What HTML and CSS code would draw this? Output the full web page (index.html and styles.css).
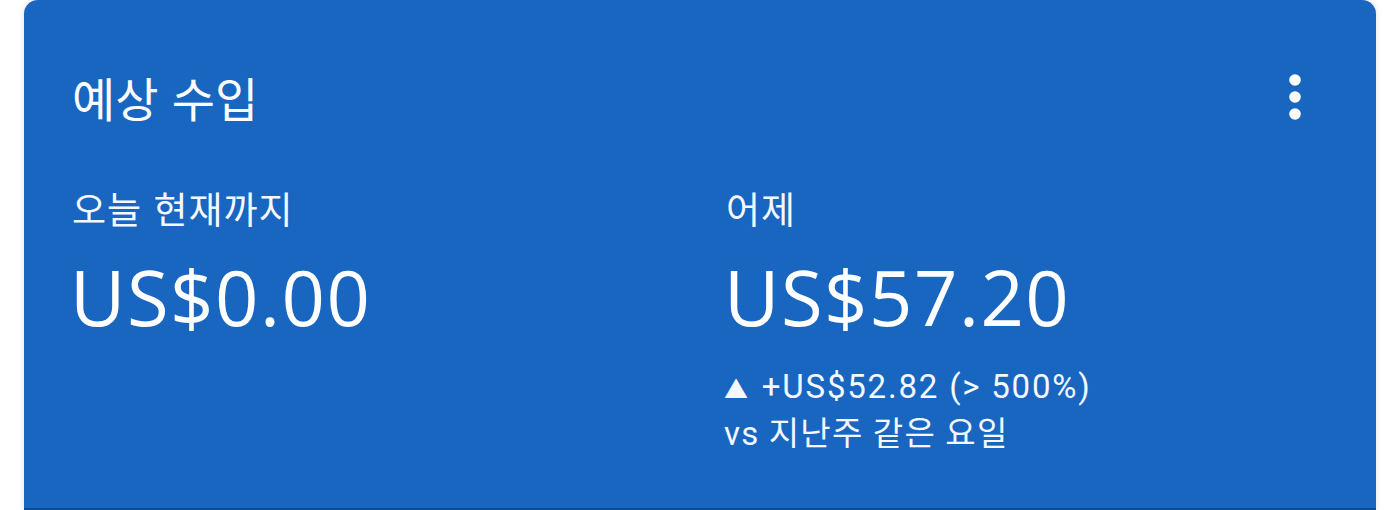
FILE: index.html
```html
<!DOCTYPE html>
<html lang="ko">
<head>
    <meta charset="UTF-8">
    <title>예상 수입</title>
    <link rel="stylesheet" href="styles.css">
</head>
<body>
    <div class="earnings-card">
        <!-- 헤더 -->
        <div class="card-header">
            <div class="card-title">예상 수입</div>
            <div class="more-btn">
                <svg width="12" height="46" viewBox="0 0 12 46">
                    <circle cx="6" cy="6" r="5.8" fill="#fff"/>
                    <circle cx="6" cy="23" r="5.8" fill="#fff"/>
                    <circle cx="6" cy="40" r="5.8" fill="#fff"/>
                </svg>
            </div>
        </div>

        <!-- 수입 항목 -->
        <div class="stats">
            <div class="stat">
                <div class="stat-label">오늘 현재까지</div>
                <div class="stat-value">US$0.00</div>
            </div>
            <div class="stat">
                <div class="stat-label">어제</div>
                <div class="stat-value">US$57.20</div>
                <div class="stat-change">
                    <div class="change-amount"><span class="arrow">▲</span> +US$52.82 (&gt; 500%)</div>
                    <div>vs 지난주 같은 요일</div>
                </div>
            </div>
        </div>
    </div>
</body>
</html>
```

FILE: styles.css
```css
* {
    margin: 0;
    padding: 0;
    box-sizing: border-box;
}

body {
    font-family: Roboto, "Noto Sans CJK KR", sans-serif;
    background-color: #fff;
    color: #fff;
    height: 510px;
    overflow: hidden;
}

/* 카드 */
.earnings-card {
    margin: 0 24px;
    height: 510px;
    background: #1966c1;
    border-radius: 14px 14px 0 0;
    border-bottom: 2px solid #0f4c98;
    box-shadow: 0 0 6px rgba(0, 0, 0, 0.12);
    padding: 73px 75px 0 48px;
}

.card-header {
    display: flex;
    justify-content: space-between;
    align-items: center;
    height: 48px;
}

.card-title {
    font-family: "Noto Sans CJK KR", sans-serif;
    font-size: 47px;
    line-height: 48px;
    color: #fdfdff;
}

.more-btn {
    display: flex;
    align-items: center;
    height: 48px;
}

/* 통계 */
.stats {
    display: grid;
    grid-template-columns: 654px 1fr;
    margin-top: 67px;
}

.stat-label {
    font-family: "Noto Sans CJK KR", sans-serif;
    font-size: 37px;
    line-height: 40px;
    letter-spacing: 1px;
    color: #f4f8ff;
}

.stat-value {
    font-family: "Open Sans", sans-serif;
    font-size: 76px;
    line-height: 90px;
    letter-spacing: 1.5px;
    margin-top: 24px;
    margin-left: -2px;
}

.stat-change {
    margin-top: 23px;
    font-size: 33px;
    line-height: 44px;
    letter-spacing: 1.2px;
    color: #f4f8ff;
    margin-left: -2px;
}

.change-amount {
    letter-spacing: 1.8px;
}

.arrow {
    font-size: 24px;
    margin-right: 2px;
}
```
